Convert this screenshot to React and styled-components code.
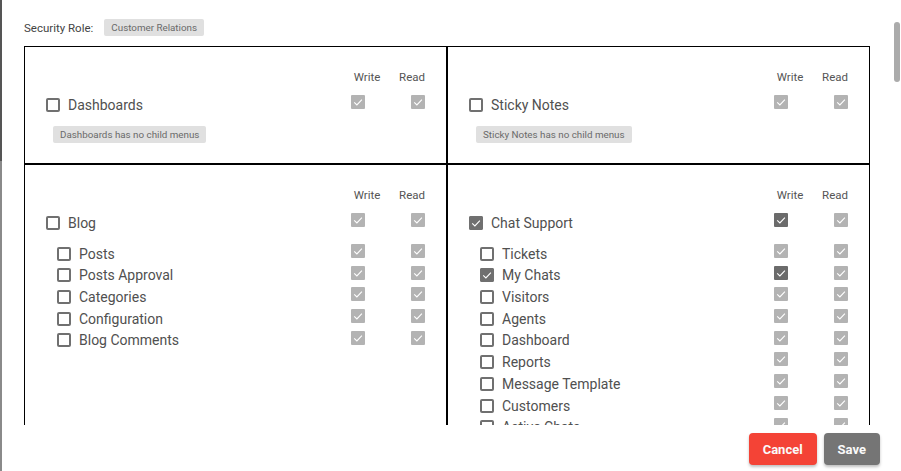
import React from 'react';
import styled, { createGlobalStyle } from 'styled-components';

const GlobalStyle = createGlobalStyle`
  html, body { margin: 0; padding: 0; background: #fff; }
  body { font-family: Roboto, "Noto Sans", Arial, sans-serif; }
  * { box-sizing: border-box; }
`;

const Screen = styled.div`
  display: flex;
  width: 901px;
  height: 471px;
  overflow: hidden;
`;

const BackdropEdge = styled.div`
  width: 2px;
  flex: none;
  display: flex;
  flex-direction: column;
`;

const EdgePart = styled.div`
  background: ${(p) => (p.$dark ? '#555555' : '#8a8a8a')};
  height: ${(p) => (p.$dark ? '161px' : 'auto')};
  flex: ${(p) => (p.$dark ? 'none' : '1')};
`;

const Modal = styled.div`
  flex: 1;
  display: flex;
  flex-direction: column;
  position: relative;
  background: #fff;
`;

const Body = styled.div`
  height: 425px;
  overflow: hidden;
  padding: 19px 31px 0 22px;
`;

const ScrollThumb = styled.div`
  position: absolute;
  top: 22px;
  right: 1px;
  width: 6px;
  height: 60px;
  border-radius: 3px;
  background: #ababab;
`;

const RoleRow = styled.div`
  display: flex;
  align-items: center;
  gap: 11px;
  height: 17px;
`;

const RoleLabel = styled.span`
  font-size: 11.5px;
  color: #444;
`;

const Badge = styled.span`
  display: inline-block;
  height: 17px;
  line-height: 17px;
  padding: 0 7px;
  background: #e0e0e0;
  border-radius: 2px;
  font-size: 9.8px;
  color: #6a6a6a;
  white-space: nowrap;
`;

const NoChildBadge = styled(Badge)`
  align-self: flex-start;
  margin-top: 14.5px;
  margin-left: 7px;
`;

const Grid = styled.div`
  margin-top: 10px;
  width: 846px;
  display: grid;
  grid-template-columns: 1fr 1fr;
`;

const Cell = styled.div`
  border: 1px solid #000;
  padding: 22.5px 21px 20px;
  display: flex;
  flex-direction: column;
`;

const Columns = styled.div`
  display: grid;
  grid-template-columns: 1fr 32px 42px;
  align-items: start;
`;

const PermHeader = styled(Columns)`
  font-size: 11.5px;
  line-height: 14px;
  color: #555;
`;

const HeadText = styled.span`
  text-align: ${(p) => p.$align};
`;

const MainRow = styled(Columns)`
  margin-top: 11px;
`;

const ChildList = styled.div`
  margin-top: 14.5px;
  display: flex;
  flex-direction: column;
`;

const ChildRow = styled(Columns)`
  height: 21.7px;
`;

const Label = styled.label`
  display: flex;
  align-items: center;
  gap: 8px;
  padding-top: ${(p) => (p.$child ? '2.7px' : '3px')};
  padding-left: ${(p) => (p.$child ? '11px' : '0')};
  font-size: 14px;
  line-height: 14px;
  color: #505050;
  white-space: nowrap;
`;

const PermCell = styled.div`
  display: flex;
  justify-content: ${(p) => p.$align};
`;

const LabelBox = styled.span`
  width: 14px;
  height: 14px;
  flex: none;
  border-radius: 2px;
  background: ${(p) => (p.$checked ? '#6f6f6f' : '#fff')};
  box-shadow: inset 0 0 0 2px #707070;
  display: flex;
`;

const PermBox = styled.span`
  width: 14px;
  height: 14px;
  border-radius: 1px;
  background: ${(p) => (p.$active ? '#6b6b6b' : '#b3b3b3')};
  display: flex;
`;

const Footer = styled.div`
  height: 46px;
  display: flex;
  justify-content: flex-end;
  align-items: flex-start;
  gap: 7px;
  padding: 8px 21px 0 0;
`;

const Button = styled.button`
  height: 32px;
  padding: 0 14px;
  border: none;
  border-radius: 4px;
  font-family: Roboto, "Noto Sans", Arial, sans-serif;
  font-weight: 700;
  font-size: 13px;
  color: #fafafa;
  background: ${(p) => (p.$variant === 'cancel' ? '#f44336' : '#757575')};
  box-shadow: 0 2px 3px rgba(0, 0, 0, 0.25);
  cursor: pointer;
`;

const Check = () => (
  <svg width="14" height="14" viewBox="0 0 14 14">
    <path d="M3.2 7.3 L5.9 9.9 L10.9 4.6" stroke="#fff" strokeWidth="1.1" fill="none" />
  </svg>
);

const PermRow = ({ Row, label, checked, active, child }) => (
  <Row>
    <Label $child={child}>
      <LabelBox $checked={checked}>{checked && <Check />}</LabelBox>
      {label}
    </Label>
    <PermCell $align="flex-start">
      <PermBox $active={active}><Check /></PermBox>
    </PermCell>
    <PermCell $align="flex-end">
      <PermBox><Check /></PermBox>
    </PermCell>
  </Row>
);

const menus = [
  { title: 'Dashboards', children: [] },
  { title: 'Sticky Notes', children: [] },
  {
    title: 'Blog',
    children: [
      { name: 'Posts' },
      { name: 'Posts Approval' },
      { name: 'Categories' },
      { name: 'Configuration' },
      { name: 'Blog Comments' },
    ],
  },
  {
    title: 'Chat Support',
    checked: true,
    active: true,
    children: [
      { name: 'Tickets' },
      { name: 'My Chats', checked: true, active: true },
      { name: 'Visitors' },
      { name: 'Agents' },
      { name: 'Dashboard' },
      { name: 'Reports' },
      { name: 'Message Template' },
      { name: 'Customers' },
      { name: 'Active Chats' },
      { name: 'Chat Settings' },
      { name: 'Departments' },
    ],
  },
];

export default function App() {
  return (
    <Screen>
      <GlobalStyle />
      <BackdropEdge>
        <EdgePart $dark />
        <EdgePart />
      </BackdropEdge>
      <Modal>
        <Body>
          <RoleRow>
            <RoleLabel>Security Role:</RoleLabel>
            <Badge>Customer Relations</Badge>
          </RoleRow>
          <Grid>
            {menus.map((m) => (
              <Cell key={m.title}>
                <PermHeader>
                  <span />
                  <HeadText $align="center">Write</HeadText>
                  <HeadText $align="right">Read</HeadText>
                </PermHeader>
                <PermRow Row={MainRow} label={m.title} checked={m.checked} active={m.active} />
                {m.children.length === 0 ? (
                  <NoChildBadge>{m.title} has no child menus</NoChildBadge>
                ) : (
                  <ChildList>
                    {m.children.map((c) => (
                      <PermRow
                        key={c.name}
                        Row={ChildRow}
                        label={c.name}
                        checked={c.checked}
                        active={c.active}
                        child
                      />
                    ))}
                  </ChildList>
                )}
              </Cell>
            ))}
          </Grid>
        </Body>
        <Footer>
          <Button $variant="cancel">Cancel</Button>
          <Button $variant="save">Save</Button>
        </Footer>
        <ScrollThumb />
      </Modal>
    </Screen>
  );
}
